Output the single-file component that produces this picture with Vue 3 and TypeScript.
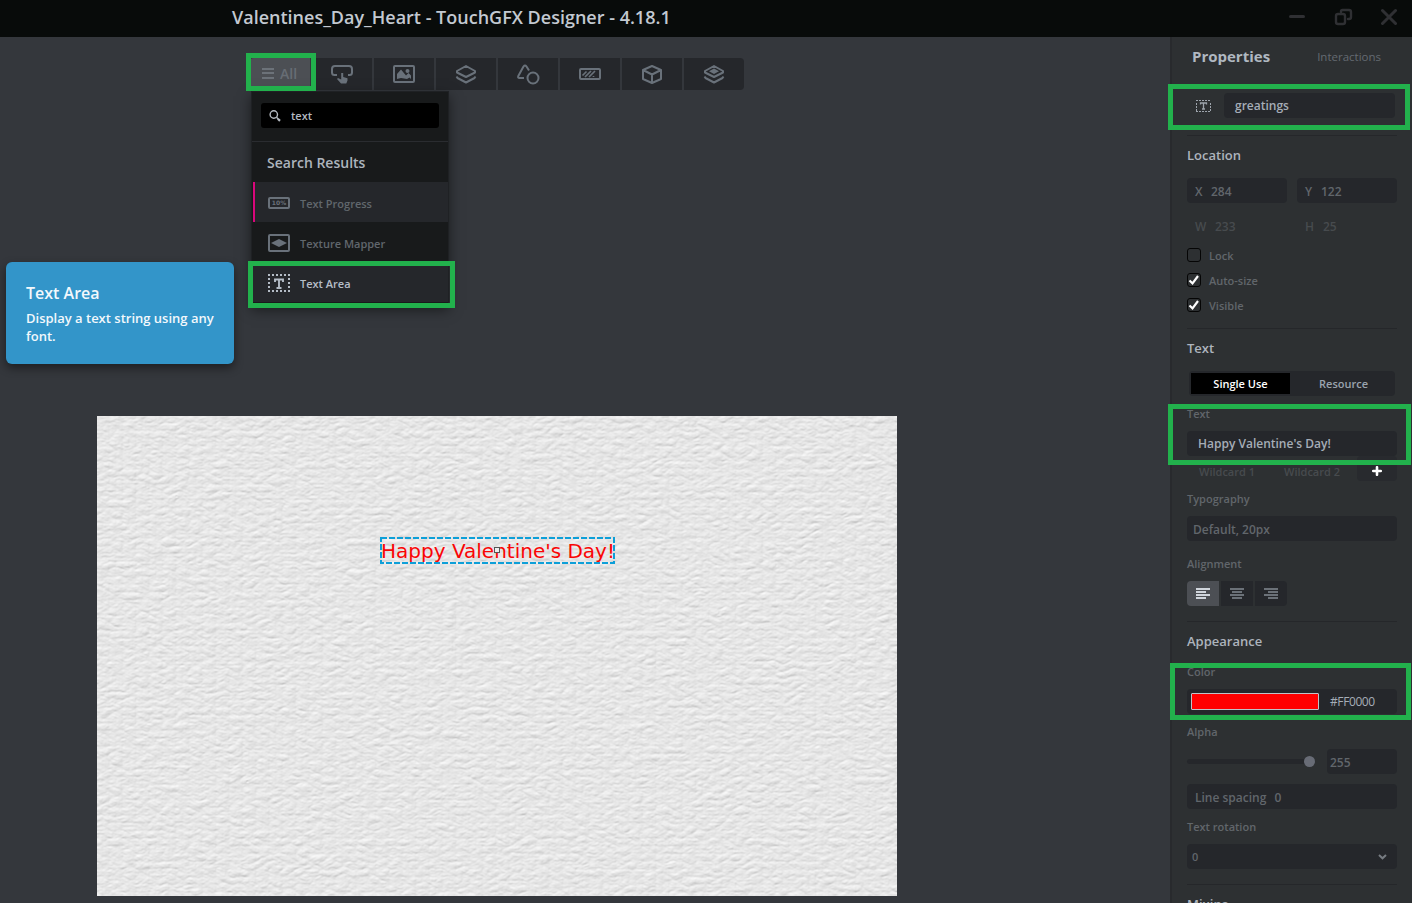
<script setup lang="ts">
interface Tool { id: string }
const tools: Tool[] = [
  { id: 'button' }, { id: 'image' }, { id: 'container' }, { id: 'shape' },
  { id: 'progress' }, { id: 'misc' }, { id: 'custom' },
]
const checks = [
  { label: 'Lock', on: false },
  { label: 'Auto-size', on: true },
  { label: 'Visible', on: true },
]
const alignments = ['left', 'center', 'right']
const bars: Record<string, string> = {
  left: 'M0 1h14M0 4h10M0 7h14M0 10h10',
  center: 'M0 1h14M2 4h10M0 7h14M2 10h10',
  right: 'M0 1h14M4 4h10M0 7h14M4 10h10',
}
</script>

<template>
  <div class="app">
    <header class="titlebar">
      <span class="title">Valentines_Day_Heart - TouchGFX Designer - 4.18.1</span>
      <svg class="winbtns" width="110" height="18" viewBox="0 0 110 18" fill="none" stroke="#2f3033" stroke-linecap="round">
        <path d="M3.500 8.500h13" stroke-width="3" />
        <rect x="49" y="6" width="9" height="10" rx="2" stroke-width="2.400" />
        <path d="M54 4V3.500q0-1.500 1.500-1.500H62q2 0 2 2v5q0 2-2 2h-1" stroke-width="2.400" />
        <path d="M95.500 2.500 108.500 15.500M108.500 2.500 95.500 15.500" stroke-width="3" />
      </svg>
    </header>

    <div class="body">
      <main class="workspace">
        <nav class="toolbar">
          <button class="tool all">
            <svg width="12" height="12" viewBox="0 0 12 12" stroke="#6c7279" stroke-width="2"><path d="M0 1h12M0 5h12M0 10h12" /></svg>
            <span>All</span>
          </button>
          <button v-for="t in tools" :key="t.id" class="tool">
            <svg width="24" height="22" viewBox="0 0 24 22" fill="none" stroke="#69717a" stroke-width="2" stroke-linejoin="round">
              <template v-if="t.id === 'button'">
                <path d="M7 12H4.500Q2 12 2 9.500V6Q2 3 5 3h14q3 0 3 3v3.500q0 2.500-2.500 2.500H18" />
                <path d="M11.200 10h2v4l4.300 1.200v2.300l-1.200 3H11L7 16l1-1 3.200 1.500z" fill="#69717a" stroke="none" />
              </template>
              <template v-else-if="t.id === 'image'">
                <rect x="2" y="3" width="20" height="16" rx="1" />
                <path d="M5 16V11l4-4.500 5 6 2.500-2.500L19 12.500V16l-1.500-1.500L15 16l-6-1z" fill="#69717a" stroke="none" />
                <circle cx="15.500" cy="8" r="2" fill="#69717a" stroke="none" />
              </template>
              <template v-else-if="t.id === 'container'">
                <path d="M12 3 21 8v1.500L12 14 3 9.500V8z" /><path d="M2.500 13.500 3.500 15 12 19.500 20.500 15 21.500 13.500" />
              </template>
              <template v-else-if="t.id === 'shape'">
                <path d="M8 15H3.500Q1.500 15 2.300 13L7.500 3.500Q9 1.500 10.500 3.500L13 7.500" />
                <circle cx="17" cy="15" r="5.500" />
              </template>
              <template v-else-if="t.id === 'progress'">
                <rect x="2" y="6" width="20" height="10" rx="1" />
                <path d="M4.500 12.500l4-4M7 14l6-6M11 14l6-6M15.500 14V13" stroke-width="1.700" />
              </template>
              <template v-else-if="t.id === 'misc'">
                <path d="M12 3 21 7v9l-9 4-9-4V7zM3 7l9 4.500L21 7M12 11.500V20" />
              </template>
              <template v-else>
                <path d="M12 3 21 8v1.500L12 14 3 9.500V8z" /><path d="M2.500 13.500 3.500 15 12 19.500 20.500 15 21.500 13.500" />
                <path d="m12 5.500 5 2.700-5 2.800-5-2.800z" fill="#69717a" stroke="none" />
              </template>
            </svg>
          </button>
        </nav>

        <section class="menu">
          <div class="searchrow">
            <div class="search">
              <svg width="13" height="13" viewBox="0 0 13 13" fill="none" stroke="#b4bac1" stroke-width="1.400"><circle cx="4.800" cy="5.500" r="3.700" /><path d="M7.500 8.300 9 9.800" /><path d="M8.800 9.700 11 11.900" stroke-width="2.200" /></svg>
              <span>text</span>
            </div>
          </div>
          <h2>Search Results</h2>
          <div class="item marked">
            <svg width="24" height="20" viewBox="0 0 24 20" fill="none" stroke="#69717a" stroke-width="2">
              <rect x="2" y="5" width="20" height="10" rx="1" />
              <text x="12" y="12.200" class="pct">10%</text>
            </svg>
            <span>Text Progress</span>
          </div>
          <div class="item">
            <svg width="24" height="20" viewBox="0 0 24 20" fill="none" stroke="#69717a" stroke-width="2">
              <rect x="2" y="2" width="20" height="16" rx="1" /><path d="M4 10 12 6l8 4-8 4z" fill="#69717a" stroke="none" />
            </svg>
            <span>Texture Mapper</span>
          </div>
          <div class="item current">
            <svg width="24" height="20" viewBox="0 0 24 20" fill="none" stroke="#b4bcc6" stroke-width="2">
              <path d="M1 2h22M1 18h22" stroke-dasharray="2 2" /><path d="M2 5v12M22 5v12" stroke-dasharray="2 2" />
              <path d="M8 9V6.500h8V9M12 6v9M9.500 15h5" stroke-width="1.900" />
            </svg>
            <span>Text Area</span>
          </div>
        </section>

        <aside class="tooltip">
          <strong>Text Area</strong>
          <p>Display a text string using any<br>font.</p>
        </aside>

        <div class="screen">
          <svg class="leather" width="800" height="480">
            <filter id="leather" x="0" y="0" width="100%" height="100%" color-interpolation-filters="sRGB">
              <feTurbulence type="turbulence" baseFrequency="0.075 0.13" numOctaves="3" seed="8" result="n" />
              <feColorMatrix in="n" type="matrix" values="0 0 0 0 0  0 0 0 0 0  0 0 0 0 0  0.8 0.8 0 0 0" />
              <feDiffuseLighting surfaceScale="0.36" diffuseConstant="1.065" lighting-color="#f0f0f0">
                <feDistantLight azimuth="250" elevation="64" />
              </feDiffuseLighting>
            </filter>
            <rect width="800" height="480" filter="url(#leather)" />
          </svg>
          <div class="selection">
            <svg width="235" height="27" fill="none" stroke="#0d9fd8" stroke-width="2"><rect x="1" y="1" width="233" height="25" stroke-dasharray="6 2" /></svg>
            <span>Happy Valentine's Day!</span>
            <i class="handle"></i>
          </div>
        </div>
      </main>

      <aside class="panel">
        <div class="tabs"><b>Properties</b><span>Interactions</span></div>
        <div class="namerow">
          <svg width="17" height="14" viewBox="0 0 17 14" fill="none" stroke="#9da4ac" stroke-width="1">
            <path d="M1 1.500h15M1 12.500h15" stroke-dasharray="2 1" /><path d="M1.500 4v8M15.500 4v8" stroke-dasharray="2 1" />
            <path d="M5.500 5.500V4h6v1.500M8.500 4v6M7 10h3" stroke-width="1.300" />
          </svg>
          <div class="field bright name">greatings</div>
        </div>
        <hr class="d1">
        <h3>Location</h3>
        <div class="pair xy"><div class="field"><span>X</span>284</div><div class="field"><span>Y</span>122</div></div>
        <div class="pair wh"><div><span class="w">W</span>233</div><div><span class="h">H</span>25</div></div>
        <div class="checks">
          <label v-for="c in checks" :key="c.label">
            <i class="box"><svg v-if="c.on" width="12" height="12" viewBox="0 0 12 12" fill="none" stroke="#fff" stroke-width="2.200"><path d="M1.500 6.500 4.500 9.300 10 2" /></svg></i>
            {{ c.label }}
          </label>
        </div>
        <hr class="d2">
        <h3>Text</h3>
        <div class="segment"><b>Single Use</b><span>Resource</span></div>
        <div class="caption c1">Text</div>
        <div class="field bright value">Happy Valentine's Day!</div>
        <div class="wild"><span>Wildcard 1</span><span>Wildcard 2</span><div class="plus"><svg width="10" height="10" stroke="#fff" stroke-width="2.600" stroke-linecap="round"><path d="M5 1.200v7.600M1.200 5h7.600" /></svg></div></div>
        <div class="caption c2">Typography</div>
        <div class="field typo">Default, 20px</div>
        <div class="caption c3">Alignment</div>
        <div class="aligns">
          <button v-for="a in alignments" :key="a" :class="{ on: a === 'left' }">
            <svg width="14" height="11" fill="none" stroke="currentColor" stroke-width="2"><path :d="bars[a]" /></svg>
          </button>
        </div>
        <hr class="d3">
        <h3>Appearance</h3>
        <div class="caption c4">Color</div>
        <div class="field bright color"><i class="swatch"></i><span>#FF0000</span></div>
        <div class="caption c5">Alpha</div>
        <div class="alpha"><div class="track"><i></i></div><div class="field">255</div></div>
        <div class="field spacing">Line spacing<span>0</span></div>
        <div class="caption c6">Text rotation</div>
        <div class="field rotation">0<svg width="9" height="6" fill="none" stroke="#777c82" stroke-width="2"><path d="M1 1 4.500 4.300 8 1" /></svg></div>
        <hr class="d4">
        <h3>Mixins</h3>
      </aside>
    </div>

    <div class="mark m-all"></div>
    <div class="mark m-area"></div>
    <div class="mark m-name"></div>
    <div class="mark m-text"></div>
    <div class="mark m-color"></div>
  </div>
</template>

<style>
body { margin: 0; overflow: hidden; background: #34373c; }
</style>

<style scoped>
* { box-sizing: border-box; }
.app { position: relative; width: 1412px; height: 903px; overflow: hidden; display: flex; flex-direction: column; font-family: "Open Sans", "Noto Sans", sans-serif; font-weight: 600; background: #34373c; }
.titlebar { height: 37px; flex: none; background: #080b0a; display: flex; align-items: center; justify-content: space-between; padding: 0 15px 3px 232px; color: #c3c9d1; }
.title { font-size: 18px; white-space: nowrap; }
.winbtns { width: 110px; }
.body { flex: 1; min-height: 0; display: flex; }
.workspace { position: relative; width: 1170px; flex: none; padding: 21px 0 0 97px; }
button { border: 0; padding: 0; font: inherit; }
.toolbar { display: flex; gap: 2px; width: 494px; height: 32px; margin-left: 153px; border-radius: 4px; overflow: hidden; }
.tool { width: 60px; height: 32px; flex: none; background: #25272b; display: flex; align-items: center; justify-content: center; }
.tool.all { background: #4c4f54; color: #676d74; font-size: 14px; line-height: 30px; gap: 6px; padding: 0 1px 1px 0; }
.screen { position: relative; width: 800px; height: 480px; margin-top: 326px; background: #e8e8e8; }
.leather { display: block; }
.selection { position: absolute; left: 283px; top: 121px; width: 235px; height: 27px; }
.selection svg { display: block; }
.selection span { position: absolute; left: 1px; top: 1px; font: 400 20px/26px "DejaVu Sans", sans-serif; color: #fa0505; white-space: nowrap; }
.handle { position: absolute; left: 114px; top: 10px; width: 6px; height: 6px; border: 1px solid #555; background: #eee; }
.menu { position: absolute; left: 251px; top: 54px; width: 198px; height: 214px; background: #181a1b; box-shadow: 0 5px 12px rgba(0,0,0,.5); border: 1px solid #1f2124; border-width: 1px 1px 0; }
.searchrow { height: 50px; padding: 11px 9px; border-bottom: 1px solid #2a2c30; }
.search { height: 25px; background: #000; border-radius: 3px; display: flex; align-items: center; padding-left: 8px; gap: 9px; color: #b4bac1; font-size: 11px; }
h2 { margin: 0; height: 40px; line-height: 41px; padding-left: 15px; font-size: 14px; font-weight: 600; color: #adb4bd; }
.item { height: 40px; display: flex; align-items: center; gap: 9px; padding: 3px 0 0 15px; color: #61676d; font-size: 11px; }
.item svg { position: relative; top: -1px; }
.marked { background: #25272b; box-shadow: inset 1px 0 #181a1b, inset 3px 0 #d9077c; }
.current { background: #25272b; color: #b7bec8; }
.pct { font: 700 6px "DejaVu Sans", sans-serif; fill: #69717a; stroke: none; text-anchor: middle; }
.tooltip { position: absolute; left: 6px; top: 225px; width: 228px; height: 102px; padding: 20px; border-radius: 6px; background: #3395c9; color: #f2f8fc; box-shadow: 0 4px 10px rgba(0,0,0,.45); }
.tooltip strong { display: block; font-size: 16px; line-height: 22px; font-weight: 600; }
.tooltip p { margin: 5px 0 0; font-size: 13px; line-height: 18px; white-space: nowrap; }

.panel { width: 242px; background: #2d3032; border-left: 2px solid #282a2d; padding: 0 15px; display: flex; flex-direction: column; color: #61666b; font-size: 12px; }
.panel > * { flex: none; }
.tabs { height: 40px; display: flex; justify-content: space-between; align-items: center; padding: 0 16px 1px 5px; color: #646a71; font-size: 11.500px; font-weight: 500; }
.tabs b { font-size: 15px; font-weight: 700; color: #b0b8c1; padding-bottom: 2px; }
.namerow { display: flex; align-items: center; justify-content: space-between; margin-top: 16px; padding: 0 2px 0 8px; }
.field { height: 25px; background: #25272b; border-radius: 4px; display: flex; align-items: center; padding-left: 8px; padding-top: 1px; }
.bright { color: #a5adb7; }
.name { width: 171px; padding: 0 0 0 11px; }
hr { width: 210px; height: 1px; border: 0; background: #25272a; margin: 17px 0 0; }
h3 { margin: 9px 0 0; height: 20px; line-height: 20px; font-size: 13px; font-weight: 600; color: #adb4bd; }
.pair { display: grid; grid-template-columns: 100px 100px; gap: 10px; }
.pair span { width: 16px; }
.xy { margin-top: 13px; }
.wh { margin-top: 10px; height: 25px; color: #474b4e; }
.wh > div { display: flex; align-items: center; padding: 1px 0 0 8px; }
.pair .w { width: 20px; }
.pair .h { width: 18px; }
.checks { margin-top: 5px; display: flex; flex-direction: column; font-size: 11px; }
.checks label { height: 25px; display: flex; align-items: center; gap: 8px; }
.box { width: 14px; height: 14px; margin-top: -1px; border: 1px solid #050505; border-radius: 3px; display: flex; }
.d2 { margin-top: 10px; }
.segment { margin: 13px 2px 0; height: 25px; padding: 2px; background: #25272b; border-radius: 4px; display: flex; font-size: 11px; line-height: 21px; text-align: center; color: #9ba3ae; }
.segment b { width: 99px; background: #000; color: #fff; font-weight: 600; }
.segment span { flex: 1; padding-left: 4px; }
.caption { height: 20px; line-height: 20px; font-size: 11px; }
.c1 { margin-top: 8px; }
.value { margin-top: 7px; padding: 0 0 0 11px; }
.wild { height: 25px; display: flex; font-size: 11px; line-height: 31px; color: #474b4e; padding-left: 12px; }
.wild span { width: 85px; }
.plus { flex: none; width: 40px; margin-left: -12px; background: #282a2e; border-radius: 4px; display: flex; justify-content: center; align-items: center; padding-top: 5px; }
.c2 { margin-top: 8px; }
.typo { margin-top: 7px; padding-left: 6px; }
.c3 { margin-top: 13px; }
.aligns { display: flex; gap: 2px; margin-top: 7px; width: 100px; border-radius: 4px; overflow: hidden; }
.aligns button { width: 32px; height: 25px; background: #25272b; color: #6b7178; display: flex; align-items: center; justify-content: center; }
.aligns .on { background: #4c4f54; color: #d0d5dc; }
.d3 { margin-top: 15px; }
.c4 { margin-top: 11px; }
.color { margin-top: 7px; padding: 0 0 0 4px; gap: 11px; font-weight: 400; }
.color span { letter-spacing: -.4px; }
.swatch { width: 128px; height: 17px; background: #f00; border: 1px solid #bfc3c8; border-radius: 1px; }
.c5 { margin-top: 8px; }
.alpha { margin-top: 7px; display: flex; justify-content: space-between; }
.alpha .field { width: 70px; padding-left: 3px; }
.track { position: relative; width: 128px; height: 5px; margin-top: 10px; background: #25272b; border-radius: 3px; }
.track i { position: absolute; right: 0; top: -3px; width: 11px; height: 11px; border-radius: 50%; background: #686c76; }
.spacing { margin-top: 10px; gap: 8px; }
.c6 { margin-top: 8px; }
.rotation { margin-top: 7px; justify-content: space-between; padding: 0 10px 0 5px; font-size: 11px; }
.d4 { margin-top: 15px; }

.mark { position: absolute; border: 5px solid #22b14c; }
.m-all { left: 246px; top: 53px; width: 70px; height: 38px; }
.m-area { left: 248px; top: 261px; width: 207px; height: 47px; }
.m-name { left: 1168px; top: 84px; width: 242px; height: 46px; }
.m-text { left: 1168px; top: 404px; width: 243px; height: 61px; }
.m-color { left: 1170px; top: 663px; width: 241px; height: 57px; }
</style>
